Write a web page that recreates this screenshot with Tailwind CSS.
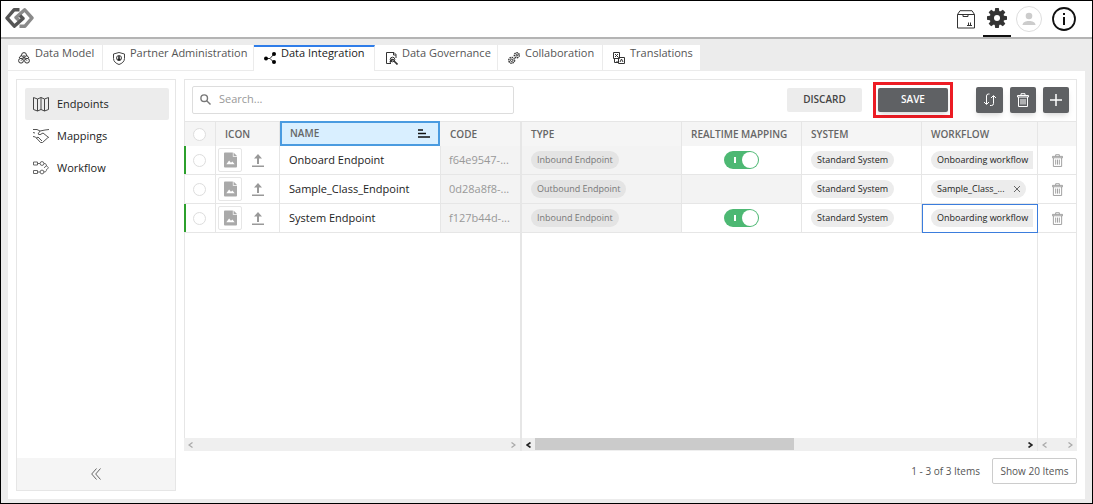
<!DOCTYPE html>
<html lang="en">
<head>
    <meta charset="UTF-8">
    <meta name="viewport" content="width=device-width, initial-scale=1.0">
    <title>Data Integration - Endpoints</title>
    <script src="https://cdn.jsdelivr.net/npm/@tailwindcss/browser@4"></script>
</head>
<body class="h-screen flex flex-col border border-black bg-[#ececec] font-['Open_Sans',sans-serif] text-[11px] text-[#222] overflow-hidden">

    <!-- Shared icons -->
    <svg class="hidden">
        <symbol id="icon-image" viewBox="0 0 14 16">
            <path fill="#a9a9a9" d="M1 0h8.500v4.500H14V15a1 1 0 0 1-1 1H1a1 1 0 0 1-1-1V1a1 1 0 0 1 1-1zM10.300 0L14 3.700h-3.700z"/>
            <path fill="#fff" d="M2.500 12.500l3-4 2 2.500 1.500-1.500 2.500 3z"/>
        </symbol>
        <symbol id="icon-upload" viewBox="0 0 12 13">
            <path fill="#999" d="M6 0l4 4.500H7V10H5V4.500H2zM0 11.500h12V13H0z"/>
        </symbol>
        <symbol id="icon-trash" viewBox="0 0 12 14">
            <path fill="none" stroke="currentColor" d="M.5 2.500h11v1.500H.5zM4 2.500V.7h4v1.800M1.500 4v9.500h9V4M4 6v5.500M6 6v5.500M8 6v5.500"/>
        </symbol>
    </svg>

    <header class="h-[38px] shrink-0 flex items-center bg-white border-b-2 border-[#b4b4b4] pl-1 pr-4">
        <a href="#" aria-label="Home" class="-mt-[2px]">
            <svg class="w-[29px] h-5" viewBox="0 0 29 20" fill="none" stroke-width="3.400" stroke-linejoin="round">
                <path stroke="#8a8a8a" d="M14.500 18.200H20L27 10l-7.300-8.200L11 9.500l3 3"/>
                <path stroke="#555" d="M14.500 1.800H9L2 10l7.300 8.200L18 10.500l-3-3"/>
            </svg>
        </a>
        <div class="ml-auto flex items-center h-full">
            <button aria-label="Packages">
                <svg class="w-[18px] h-[19px]" viewBox="0 0 18 19" fill="none" stroke="#333">
                    <path d="M.5 4.500h17v13.500H.5zM.5 4.500L3 .7h12l2.500 3.800"/>
                    <path d="M6 4.500v2h5v-2M10 15.500h5M11.500 15v-2.500M13.500 15v-2.500"/>
                </svg>
            </button>
            <button aria-label="Settings" class="ml-2 w-7 h-full border-b-2 border-[#111] flex justify-center items-center">
                <svg class="w-5 h-5" viewBox="0 0 20 20">
                    <g fill="#333">
                        <circle cx="10" cy="10" r="7.300"/>
                        <path id="tooth" d="M8.200 0h3.600l.6 4H7.600z"/>
                        <use href="#tooth" transform="rotate(45 10 10)"/>
                        <use href="#tooth" transform="rotate(90 10 10)"/>
                        <use href="#tooth" transform="rotate(135 10 10)"/>
                        <use href="#tooth" transform="rotate(180 10 10)"/>
                        <use href="#tooth" transform="rotate(225 10 10)"/>
                        <use href="#tooth" transform="rotate(270 10 10)"/>
                        <use href="#tooth" transform="rotate(315 10 10)"/>
                    </g>
                    <circle cx="10" cy="10" r="3" fill="#fff"/>
                </svg>
            </button>
            <button aria-label="Profile" class="ml-[5px]">
                <svg class="w-[26px] h-[26px]" viewBox="0 0 26 26">
                    <circle cx="13" cy="13" r="12.500" fill="#fff" stroke="#ddd"/>
                    <circle cx="13" cy="10" r="3.300" fill="#ccc"/>
                    <path fill="#ccc" d="M6.500 19c0-5.500 13-5.500 13 0z"/>
                </svg>
            </button>
            <button aria-label="Information" class="ml-[10px]">
                <svg class="w-6 h-6" viewBox="0 0 24 24">
                    <circle cx="12" cy="12" r="11" fill="#fff" stroke="#111" stroke-width="1.800"/>
                    <path fill="#111" d="M11 6h2v2h-2zM11 10h2v8h-2z"/>
                </svg>
            </button>
        </div>
    </header>

    <main class="flex-1 min-h-0 flex flex-col mt-[6px] mx-[7px] mb-1">
        <nav class="h-[26px] shrink-0 flex text-[#555] whitespace-nowrap">
            <a href="#" class="w-[95px] pl-[10px] flex bg-white border-r border-b border-[#ebebeb]">
                <svg class="w-3 h-3 mt-[7px] mr-[5px]" viewBox="0 0 12 12" fill="none" stroke="#333">
                    <circle cx="6" cy="3" r="2.400"/><circle cx="3" cy="8.700" r="2.400"/><circle cx="9" cy="8.700" r="2.400"/>
                    <path d="M3.500 3L1 6M8.500 3L11 6M6 3v2.500L3 8.700M6 5.500l3 3.200"/>
                </svg>
                <span>Data Model</span>
            </a>
            <a href="#" class="w-[151px] pl-[10px] flex bg-white border-r border-b border-[#ebebeb]">
                <svg class="w-3 h-[13px] mt-[7px] mr-[5px]" viewBox="0 0 12 13" fill="none" stroke="#444">
                    <path d="M6 .5L11.500 2v4.500c0 3-2.500 5-5.500 6-3-1-5.500-3-5.500-6V2z"/>
                    <circle cx="6" cy="6" r="2.500"/><path stroke="#222" stroke-width="1.500" d="M6 4v4.500M4.500 7.500h3"/>
                </svg>
                <span>Partner Administration</span>
            </a>
            <a href="#" class="w-[121px] pl-[10px] flex bg-white border-t-2 border-r border-t-[#2f7de9] border-r-[#ebebeb] text-[#222] font-medium">
                <svg class="w-3 h-3 mt-[5px] mr-[5px]" viewBox="0 0 12 12">
                    <path fill="none" stroke="#333" d="M2 6.500h4L10 2M6 6.500l4 4"/>
                    <circle cx="2" cy="6.500" r="2"/><circle cx="10" cy="2" r="2"/><circle cx="10" cy="10" r="2"/>
                </svg>
                <span class="-mt-[2px]">Data Integration</span>
            </a>
            <a href="#" class="w-[123px] pl-[11px] flex bg-white border-r border-b border-[#ebebeb]">
                <svg class="w-3 h-[13px] mt-[7px] mr-1" viewBox="0 0 12 13" fill="none" stroke="#333">
                    <path d="M5 11.500H.5V.5h7.500l2 2V6M7.500.5V3H10"/>
                    <circle cx="6.500" cy="7.500" r="2.300"/><path stroke-width="1.600" d="M8 9l3.500 3.500M4 10.500l2-3 2 .5"/>
                </svg>
                <span>Data Governance</span>
            </a>
            <a href="#" class="w-[105px] pl-[10px] flex bg-white border-r border-b border-[#ebebeb]">
                <svg class="w-3 h-3 mt-[7px] mr-[5px]" viewBox="0 0 12 12" fill="none" stroke="#333">
                    <circle cx="3.700" cy="8.300" r="2.900" stroke-width="1.400" stroke-dasharray="1.500 .7"/><circle cx="3.700" cy="8.300" r="1.200"/>
                    <circle cx="8.800" cy="3.300" r="2.500" stroke-width="1.400" stroke-dasharray="1.500 .7"/><circle cx="8.800" cy="3.300" r=".8"/>
                </svg>
                <span>Collaboration</span>
            </a>
            <a href="#" class="w-[97px] pl-[10px] flex bg-white border-b border-[#ebebeb]">
                <svg class="w-3 h-3 mt-[7px] mr-[5px]" viewBox="0 0 12 12" fill="none" stroke="#333">
                    <path d="M.5.500h6v6h-6zM5.500 5.500h6v6h-6zM2 2l3 3M5 2L2 5M7 10l1.500-3L10 10M1.500 7v3.500H5M3.500 9L5 10.500"/>
                </svg>
                <span>Translations</span>
            </a>
        </nav>

        <div class="flex-1 min-h-0 flex gap-2 bg-white p-2">
            <aside class="w-[160px] shrink-0 flex flex-col border border-[#e6e6e6]">
                <ul class="flex-1 p-2 pr-[6px]">
                    <li>
                        <a href="#" class="h-8 flex items-center pl-2 gap-2 rounded-xs bg-[#ececec]">
                            <svg class="w-4 h-4" viewBox="0 0 16 16" fill="none" stroke="#444">
                                <path d="M.5 1.500l4 1.500 3.500-1.500L11.500 3l4-1.500v12l-4 1.500L8 13.500 4.500 15l-4-1.500zM4.500 3v12M8 1.500v12M11.500 3v12"/>
                            </svg>
                            Endpoints
                        </a>
                    </li>
                    <li>
                        <a href="#" class="h-8 flex items-center pl-2 gap-2">
                            <svg class="w-4 h-4" viewBox="0 0 16 16" fill="none" stroke="#555">
                                <path d="M0 1.500h4l3 1.500M16 1.500l-4 .5-5 1-2 3 2 .7 3-1.700 5 4M0 8.500l2.500.5 5 5.500 2 0 5-4.500L16 9M0 4.500l2 .5M3 10.500l2-1.500 4 4"/>
                            </svg>
                            Mappings
                        </a>
                    </li>
                    <li>
                        <a href="#" class="h-8 flex items-center pl-2 gap-2">
                            <svg class="w-4 h-4" viewBox="0 0 16 16" fill="none" stroke="#666">
                                <path d="M.5 2h4v3h-4zM.5 10.500h4v3h-4zM4.500 3.500H7M4.500 12H7M11 3.500c2 0 2.500 1 2.500 2.500M11 12c2 0 2.500-1 2.500-2.500"/>
                                <circle cx="9" cy="3.500" r="1.900"/><circle cx="9" cy="12" r="1.900"/><path d="M11 7.800l2.500-2 2 2-2 2"/>
                            </svg>
                            Workflow
                        </a>
                    </li>
                </ul>
                <button aria-label="Collapse menu" class="h-8 flex items-center justify-center bg-[#f5f5f5]">
                    <svg class="w-[10px] h-3" viewBox="0 0 10 12" fill="none" stroke="#666"><path d="M5.500.5L.7 6l4.800 5.500M9.500.5L4.700 6l4.800 5.500"/></svg>
                </button>
            </aside>

            <section class="flex-1 min-w-0 flex flex-col">
                <div class="h-[42px] shrink-0 flex items-center px-[7px] pb-[2px] border border-b-0 border-[#e6e6e6]">
                    <label class="w-[322px] h-7 flex items-center gap-2 pl-[7px] border border-[#ddd] rounded-xs">
                        <svg class="w-[11px] h-[11px]" viewBox="0 0 11 11" fill="none" stroke="#777" stroke-width="1.400"><circle cx="4.200" cy="4.200" r="3.300"/><path d="M6.700 6.700l3.800 3.800"/></svg>
                        <input type="text" aria-label="Search" placeholder="Search..." class="flex-1 min-w-0 outline-none placeholder:text-[#999]">
                    </label>
                    <button class="ml-auto w-[75px] h-6 rounded-xs bg-[#ececec] text-[10px] font-semibold text-[#444]">DISCARD</button>
                    <div class="ml-[11px] w-20 h-9 shrink-0 flex items-center justify-center border-3 border-[#ed1c24]">
                        <button class="w-[70px] h-6 rounded-xs bg-[#5f6164] text-[10px] font-semibold text-white shadow-md">SAVE</button>
                    </div>
                    <div class="ml-[23px] flex gap-[7px] text-white">
                        <button aria-label="Refresh" class="w-[27px] h-[26px] flex items-center justify-center rounded-xs bg-[#5f6164] shadow-md">
                            <svg class="w-[14px] h-[14px]" viewBox="0 0 14 14" fill="none" stroke="currentColor"><path d="M6.500 1h-1a2 2 0 0 0-2 2v8M1 9l2.500 2.500L6 9M7 12.500h1.500a2 2 0 0 0 2-2V3M8 5l2.500-2.500L13 5"/></svg>
                        </button>
                        <button aria-label="Delete" class="w-[26px] h-[26px] flex items-center justify-center rounded-xs bg-[#5f6164] shadow-md">
                            <svg class="w-3 h-[14px]"><use href="#icon-trash"/></svg>
                        </button>
                        <button aria-label="Add" class="w-[26px] h-[26px] flex items-center justify-center rounded-xs bg-[#5f6164] shadow-md">
                            <svg class="w-3 h-3" viewBox="0 0 12 12" stroke="currentColor" stroke-width="1.500"><path d="M6 0v12M0 6h12"/></svg>
                        </button>
                    </div>
                </div>

                <table class="w-full table-fixed border-separate border-spacing-0 border-r border-[#e6e6e6]">
                    <colgroup>
                        <col class="w-8"><col class="w-16"><col class="w-[160px]"><col class="w-[82px]"><col class="w-[160px]">
                        <col class="w-[120px]"><col class="w-[120px]"><col><col class="w-[38px]">
                    </colgroup>
                    <thead>
                        <tr class="h-[25px] bg-[#f5f5f5] text-left text-[10px] text-[#666] whitespace-nowrap [&>th]:py-0 [&>th]:font-semibold [&>th]:border-[#e6e6e6]">
                            <th class="border-t border-x pl-2"><input type="checkbox" aria-label="Select all" class="block appearance-none w-[13px] h-[13px] rounded-full border border-[#ddd] bg-white"></th>
                            <th class="border-t border-r pl-[9px]">ICON</th>
                            <th class="p-0">
                                <div class="h-[25px] flex items-center justify-between pl-2 pr-2 bg-[#d9efff] border-2 border-[#4a9be0]">
                                    NAME
                                    <svg class="w-3 h-[9px]" viewBox="0 0 12 9" stroke="#111" stroke-width="1.500"><path d="M0 1h5M0 4.500h8M0 8h12"/></svg>
                                </div>
                            </th>
                            <th class="border-t border-r-2 pl-[10px]">CODE</th>
                            <th class="border-t border-r pl-[9px]">TYPE</th>
                            <th class="border-t border-r pl-[9px]">REALTIME MAPPING</th>
                            <th class="border-t border-r pl-[9px]">SYSTEM</th>
                            <th class="border-t border-r pl-[9px]">WORKFLOW</th>
                            <th class="border-t" aria-label="Actions"></th>
                        </tr>
                    </thead>
                    <tbody class="[&>tr]:h-[29px] [&_td]:py-0 [&_td]:border-b [&_td]:border-[#e6e6e6]">
                        <tr>
                            <td class="border-r p-0"><div class="h-7 flex items-center pl-[7px] border-l-2 border-[#2ca02c]"><input type="checkbox" aria-label="Select Onboard Endpoint" class="appearance-none w-[13px] h-[13px] rounded-full border border-[#ddd]"></div></td>
                            <td class="border-r p-0">
                                <div class="flex items-center pl-[2px] gap-[10px]">
                                    <button aria-label="Icon" class="w-6 h-6 flex items-center justify-center border border-[#e6e6e6] rounded-xs"><svg class="w-[13px] h-4"><use href="#icon-image"/></svg></button>
                                    <button aria-label="Upload icon"><svg class="w-3 h-[13px]"><use href="#icon-upload"/></svg></button>
                                </div>
                            </td>
                            <td class="pl-[9px]">Onboard Endpoint</td>
                            <td class="border-l border-r-2 pl-2 pt-1 whitespace-nowrap bg-[#f3f3f3] text-[#999]">f64e9547-...</td>
                            <td class="border-r pl-[9px] bg-[#f3f3f3]"><span class="flex w-fit items-center h-[18px] px-[6px] rounded-full bg-[#e4e4e4] text-[9px] text-[#777]">Inbound Endpoint</span></td>
                            <td class="border-r p-0">
                                <label class="relative block w-[35px] h-[18px] mx-auto">
                                    <input type="checkbox" checked aria-label="Realtime mapping" class="block appearance-none w-[35px] h-[18px] rounded-full bg-[#4db873]">
                                    <span class="absolute left-[10px] top-[6px] w-[2px] h-[6px] bg-white"></span>
                                    <span class="absolute right-px top-px w-4 h-4 rounded-full bg-white"></span>
                                </label>
                            </td>
                            <td class="border-r pl-[9px]"><span class="flex w-fit items-center h-[18px] px-[6px] rounded-full bg-[#ececec] text-[9px]">Standard System</span></td>
                            <td class="border-r pl-[9px] pr-1"><span class="flex items-center h-[18px] px-[6px] rounded-l-full bg-[#ececec] text-[9px] whitespace-nowrap">Onboarding workflow</span></td>
                            <td class="p-0"><button aria-label="Delete row" class="block mx-auto text-[#999]"><svg class="w-[11px] h-[13px]"><use href="#icon-trash"/></svg></button></td>
                        </tr>
                        <tr>
                            <td class="border-r p-0"><div class="h-7 flex items-center pl-2 border-l border-[#e6e6e6]"><input type="checkbox" aria-label="Select Sample_Class_Endpoint" class="appearance-none w-[13px] h-[13px] rounded-full border border-[#ddd]"></div></td>
                            <td class="border-r p-0">
                                <div class="flex items-center pl-[2px] gap-[10px]">
                                    <button aria-label="Icon" class="w-6 h-6 flex items-center justify-center border border-[#e6e6e6] rounded-xs"><svg class="w-[13px] h-4"><use href="#icon-image"/></svg></button>
                                    <button aria-label="Upload icon"><svg class="w-3 h-[13px]"><use href="#icon-upload"/></svg></button>
                                </div>
                            </td>
                            <td class="pl-[9px]">Sample_Class_Endpoint</td>
                            <td class="border-l border-r-2 pl-2 pt-1 whitespace-nowrap bg-[#f3f3f3] text-[#999]">0d28a8f8-...</td>
                            <td class="border-r pl-[9px] bg-[#f3f3f3]"><span class="flex w-fit items-center h-[18px] px-[6px] rounded-full bg-[#e4e4e4] text-[9px] text-[#777]">Outbound Endpoint</span></td>
                            <td class="border-r bg-[#f3f3f3]"></td>
                            <td class="border-r pl-[9px]"><span class="flex w-fit items-center h-[18px] px-[6px] rounded-full bg-[#ececec] text-[9px]">Standard System</span></td>
                            <td class="border-r pl-[9px] pr-[11px]">
                                <span class="flex items-center justify-between h-[18px] px-[6px] rounded-full bg-[#ececec] text-[9px]">
                                    Sample_Class_...
                                    <button aria-label="Remove workflow"><svg class="w-[6px] h-[6px]" viewBox="0 0 6 6" stroke="#666"><path d="M0 0l6 6M6 0L0 6"/></svg></button>
                                </span>
                            </td>
                            <td class="p-0"><button aria-label="Delete row" class="block mx-auto text-[#999]"><svg class="w-[11px] h-[13px]"><use href="#icon-trash"/></svg></button></td>
                        </tr>
                        <tr>
                            <td class="border-r p-0"><div class="h-7 flex items-center pl-[7px] border-l-2 border-[#2ca02c]"><input type="checkbox" aria-label="Select System Endpoint" class="appearance-none w-[13px] h-[13px] rounded-full border border-[#ddd]"></div></td>
                            <td class="border-r p-0">
                                <div class="flex items-center pl-[2px] gap-[10px]">
                                    <button aria-label="Icon" class="w-6 h-6 flex items-center justify-center border border-[#e6e6e6] rounded-xs"><svg class="w-[13px] h-4"><use href="#icon-image"/></svg></button>
                                    <button aria-label="Upload icon"><svg class="w-3 h-[13px]"><use href="#icon-upload"/></svg></button>
                                </div>
                            </td>
                            <td class="pl-[9px]">System Endpoint</td>
                            <td class="border-l border-r-2 pl-2 pt-1 whitespace-nowrap bg-[#f3f3f3] text-[#999]">f127b44d-...</td>
                            <td class="border-r pl-[9px] bg-[#f3f3f3]"><span class="flex w-fit items-center h-[18px] px-[6px] rounded-full bg-[#e4e4e4] text-[9px] text-[#777]">Inbound Endpoint</span></td>
                            <td class="border-r p-0">
                                <label class="relative block w-[35px] h-[18px] mx-auto">
                                    <input type="checkbox" checked aria-label="Realtime mapping" class="block appearance-none w-[35px] h-[18px] rounded-full bg-[#4db873]">
                                    <span class="absolute left-[10px] top-[6px] w-[2px] h-[6px] bg-white"></span>
                                    <span class="absolute right-px top-px w-4 h-4 rounded-full bg-white"></span>
                                </label>
                            </td>
                            <td class="border-r pl-[9px]"><span class="flex w-fit items-center h-[18px] px-[6px] rounded-full bg-[#ececec] text-[9px]">Standard System</span></td>
                            <td class="border-r pl-[9px] pr-1 outline outline-[#3b7ddd] -outline-offset-1"><span class="flex items-center h-[18px] px-[6px] rounded-l-full bg-[#ececec] text-[9px] whitespace-nowrap">Onboarding workflow</span></td>
                            <td class="p-0"><button aria-label="Delete row" class="block mx-auto text-[#999]"><svg class="w-[11px] h-[13px]"><use href="#icon-trash"/></svg></button></td>
                        </tr>
                    </tbody>
                </table>

                <!-- Empty grid area, one horizontal scrollbar per pane -->
                <div class="flex-1 grid grid-cols-[338px_1fr_39px] grid-rows-[1fr_13px] text-[#aaa]">
                    <div class="border-l border-r-2 border-[#e6e6e6]"></div>
                    <div class="border-r border-[#e6e6e6]"></div>
                    <div class="border-r border-[#e6e6e6]"></div>
                    <div class="flex items-center justify-between px-1 bg-[#efefef] border-r-2 border-[#e6e6e6]">
                        <svg class="w-[5px] h-[6px]" viewBox="0 0 5 6" fill="none" stroke="currentColor" stroke-width="1.300"><path d="M4.500.5L1 3l3.500 2.500"/></svg>
                        <svg class="w-[5px] h-[6px]" viewBox="0 0 5 6" fill="none" stroke="currentColor" stroke-width="1.300"><path d="M.5.5L4 3 .5 5.500"/></svg>
                    </div>
                    <div class="flex items-center px-1 gap-1 bg-[#efefef] border-r border-[#e6e6e6] text-[#222]">
                        <svg class="w-[5px] h-[6px]" viewBox="0 0 5 6" fill="none" stroke="currentColor" stroke-width="1.600"><path d="M4.500.5L1 3l3.500 2.500"/></svg>
                        <div class="flex-1 h-full"><div class="w-[53%] h-3 bg-[#cbcbcb]"></div></div>
                        <svg class="w-[5px] h-[6px]" viewBox="0 0 5 6" fill="none" stroke="currentColor" stroke-width="1.600"><path d="M.5.5L4 3 .5 5.500"/></svg>
                    </div>
                    <div class="flex items-center justify-between px-1 bg-[#efefef]">
                        <svg class="w-[5px] h-[6px]" viewBox="0 0 5 6" fill="none" stroke="currentColor" stroke-width="1.300"><path d="M4.500.5L1 3l3.500 2.500"/></svg>
                        <svg class="w-[5px] h-[6px]" viewBox="0 0 5 6" fill="none" stroke="currentColor" stroke-width="1.300"><path d="M.5.5L4 3 .5 5.500"/></svg>
                    </div>
                </div>

                <footer class="h-10 shrink-0 flex items-start justify-end gap-3 pt-[7px] text-[10px] font-medium text-[#555]">
                    <span class="leading-[26px]">1 - 3 of 3 Items</span>
                    <button class="w-[85px] h-[26px] border border-[#ccc] rounded-xs">Show 20 Items</button>
                </footer>
            </section>
        </div>
    </main>
</body>
</html>
